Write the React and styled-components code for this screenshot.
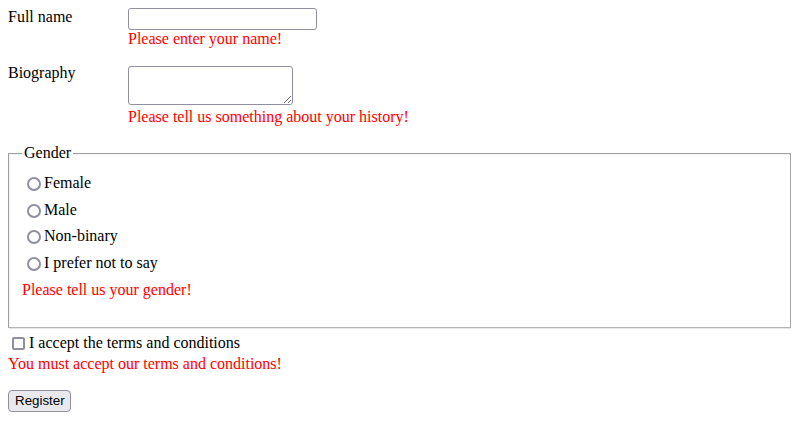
import React from "react";
import styled, { createGlobalStyle } from "styled-components";

const GlobalStyle = createGlobalStyle`
  body {
    margin: 8px;
    font-family: "Liberation Serif", "Times New Roman", serif;
    font-size: 16px;
    line-height: 18px;
    color: #000;
    background: #fff;
  }
`;

const Form = styled.form`
  display: flex;
  flex-direction: column;
`;

const Row = styled.div`
  display: flex;
  align-items: flex-start;
  margin-top: ${(p) => p.$top || 0}px;
`;

const Label = styled.label`
  width: 120px;
  flex: none;
  line-height: 18px;
`;

const Field = styled.div`
  display: flex;
  flex-direction: column;
  align-items: flex-start;
`;

const TextInput = styled.input`
  box-sizing: border-box;
  width: 189px;
  height: 22px;
  margin: 0;
  border: 1px solid #8f8f9d;
  border-radius: 3px;
  background: #fff;
  font: 13.33px "Liberation Sans", Arial, sans-serif;
  padding: 1px 4px;
`;

const TextArea = styled.textarea`
  box-sizing: border-box;
  width: 165px;
  height: 39px;
  margin: 2px 0 0;
  border: 1px solid #8f8f9d;
  border-radius: 3px;
  background: #fff;
  font: 13.33px "Liberation Mono", monospace;
  padding: 2px;
`;

const Error = styled.div`
  color: #ff0000;
  line-height: 18px;
  margin-top: ${(p) => p.$top || 0}px;
`;

const Fieldset = styled.fieldset`
  margin: 18px 0 0;
  padding: 8px 13px 24px;
  border: 1px solid #a0a0a0;
  border-right-color: #a8a8a8;
  border-bottom-color: #b4b4b4;
  box-shadow: inset 1px 1px 0 #f2f2f2, 1px 1px 0 #e6e6e6;
  min-width: 0;
`;

const Legend = styled.legend`
  padding: 0 2px;
  line-height: 18px;
`;

const OptionRow = styled.label`
  display: flex;
  align-items: center;
  height: 26.6px;
`;

const Radio = styled.input.attrs({ type: "radio" })`
  appearance: none;
  box-sizing: border-box;
  width: 14px;
  height: 14px;
  margin: 2px 3px 0 5px;
  border: 2px solid #8f8f9d;
  border-radius: 50%;
  background: #fff;
`;

const FieldError = styled(Error)`
  height: 26.6px;
  display: flex;
  align-items: center;
`;

const CheckRow = styled.label`
  display: flex;
  align-items: center;
  margin-top: 6px;
  height: 18px;
`;

const Checkbox = styled.input.attrs({ type: "checkbox" })`
  appearance: none;
  box-sizing: border-box;
  width: 13px;
  height: 13px;
  margin: 2px 4px 0 4px;
  border: 2px solid #8f8f9d;
  border-radius: 2px;
  background: #fff;
`;

const Button = styled.button`
  align-self: flex-start;
  margin-top: 17px;
  box-sizing: border-box;
  width: 63px;
  height: 22px;
  padding: 0 6px;
  border: 1px solid #8f8f9d;
  border-radius: 4px;
  background: #e9e9ed;
  color: #000;
  font: 13.33px "Liberation Sans", Arial, sans-serif;
`;

const genders = ["Female", "Male", "Non-binary", "I prefer not to say"];

export default function App() {
  return (
    <>
      <GlobalStyle />
      <Form onSubmit={(e) => e.preventDefault()}>
        <Row>
          <Label htmlFor="name">Full name</Label>
          <Field>
            <TextInput id="name" type="text" />
            <Error>Please enter your name!</Error>
          </Field>
        </Row>
        <Row $top={16}>
          <Label htmlFor="bio">Biography</Label>
          <Field>
            <TextArea id="bio" />
            <Error $top={3}>Please tell us something about your history!</Error>
          </Field>
        </Row>
        <Fieldset>
          <Legend>Gender</Legend>
          {genders.map((g) => (
            <OptionRow key={g}>
              <Radio name="gender" value={g} />
              {g}
            </OptionRow>
          ))}
          <FieldError>Please tell us your gender!</FieldError>
        </Fieldset>
        <CheckRow>
          <Checkbox />
          I accept the terms and conditions
        </CheckRow>
        <Error $top={3}>You must accept our terms and conditions!</Error>
        <Button type="submit">Register</Button>
      </Form>
    </>
  );
}
